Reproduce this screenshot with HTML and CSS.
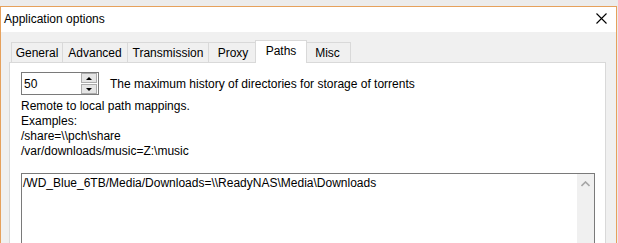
FILE: index.html
```html
<!DOCTYPE html>
<html lang="en">
<head>
    <meta charset="UTF-8">
    <title>Application options</title>
    <link rel="stylesheet" href="styles.css">
</head>
<body>
    <div class="window">
        <div class="titlebar">
            <span class="title">Application options</span>
            <svg class="close" width="11" height="11" viewBox="0 0 11 11">
                <path d="M0.5 0.5 L10.5 10.5 M10.5 0.5 L0.5 10.5" stroke="#000" stroke-width="1.1" fill="none"/>
            </svg>
        </div>

        <div class="content">
            <div class="tabs">
                <div class="tab tab-general">General</div>
                <div class="tab tab-advanced">Advanced</div>
                <div class="tab tab-transmission">Transmission</div>
                <div class="tab tab-proxy">Proxy</div>
                <div class="tab tab-paths active">Paths</div>
                <div class="tab tab-misc">Misc</div>
            </div>

            <div class="panel">
                <div class="spin-row">
                    <div class="spinbox">
                        <span class="spin-value">50</span>
                        <div class="spin-buttons">
                            <div class="spin-btn"><span class="arrow-up"></span></div>
                            <div class="spin-btn"><span class="arrow-down"></span></div>
                        </div>
                    </div>
                    <span class="spin-label">The maximum history of directories for storage of torrents</span>
                </div>

                <div class="help">
                    <div>Remote to local path mappings.</div>
                    <div>Examples:</div>
                    <div>/share=\\pch\share</div>
                    <div>/var/downloads/music=Z:\music</div>
                </div>

                <div class="mappings">
                    <div class="mappings-text">/WD_Blue_6TB/Media/Downloads=\\ReadyNAS\Media\Downloads</div>
                    <div class="scrollbar">
                        <svg width="9" height="6" viewBox="0 0 9 6">
                            <path d="M0.5 5 L4.5 1 L8.5 5" stroke="#a6a6a6" stroke-width="1.6" fill="none"/>
                        </svg>
                    </div>
                </div>
            </div>
        </div>
    </div>
</body>
</html>
```

FILE: styles.css
```css
* {
    margin: 0;
    padding: 0;
    box-sizing: border-box;
}

html, body {
    height: 100%;
    overflow: hidden;
}

body {
    font-family: "Liberation Sans", Arial, sans-serif;
    font-size: 12px;
    color: #000;
    background-color: #ececec;
    padding: 6px 1px 0 0;
}

.window {
    height: 100%;
    border: 1px solid #e6a15c;
    border-bottom: none;
    display: flex;
    flex-direction: column;
}

.titlebar {
    height: 25px;
    flex-shrink: 0;
    background-color: #fff;
    display: flex;
    align-items: center;
    padding-left: 3px;
    padding-right: 9px;
}

.title {
    padding-bottom: 1px;
}

.close {
    margin-left: auto;
    margin-bottom: 2px;
}

.content {
    flex: 1;
    background-color: #f0f0f0;
    padding: 8px 10px 0 8px;
    display: flex;
    flex-direction: column;
}

.tabs {
    display: flex;
    align-items: flex-end;
    height: 22px;
    flex-shrink: 0;
    padding-left: 2px;
}

.tab {
    height: 20px;
    border: 1px solid #d9d9d9;
    border-bottom: none;
    background-color: #f0f0f0;
    display: flex;
    align-items: center;
    justify-content: center;
    margin-left: -1px;
    padding-top: 1px;
}

.tab-general { width: 52px; margin-left: 0; }
.tab-advanced { width: 66px; }
.tab-transmission { width: 82px; }
.tab-proxy { width: 50px; }
.tab-paths { width: 52px; }
.tab-misc { width: 47px; margin-left: -3px; }

.tab.active {
    height: 23px;
    margin-left: -3px;
    margin-bottom: -1px;
    background-color: #fff;
    position: relative;
    z-index: 1;
    padding-top: 0;
    padding-bottom: 3px;
}

.panel {
    flex: 1;
    background-color: #fff;
    border: 1px solid #d9d9d9;
    border-bottom: none;
    padding: 9px 10px 0 11px;
}

.spin-row {
    display: flex;
    align-items: center;
    height: 23px;
}

.spinbox {
    width: 78px;
    height: 23px;
    border: 1px solid #7a7a7a;
    display: flex;
    align-items: center;
    padding-left: 2px;
}

.spin-value {
    flex: 1;
}

.spin-buttons {
    width: 16px;
    height: 21px;
    margin-right: 1px;
    display: flex;
    flex-direction: column;
    justify-content: space-between;
}

.spin-btn {
    height: 10px;
    background-color: #e5e5e5;
    border: 1px solid #acacac;
    display: flex;
    align-items: center;
    justify-content: center;
}

.arrow-up {
    width: 0;
    height: 0;
    border-left: 3px solid transparent;
    border-right: 3px solid transparent;
    border-bottom: 3px solid #000;
}

.arrow-down {
    width: 0;
    height: 0;
    border-left: 3px solid transparent;
    border-right: 3px solid transparent;
    border-top: 3px solid #000;
}

.spin-label {
    margin-left: 11px;
}

.help {
    margin-top: 4px;
    line-height: 15px;
}

.mappings {
    margin-top: 14px;
    width: 574px;
    flex: 1;
    height: 80px;
    border: 1px solid #7a7a7a;
    border-bottom: none;
    display: flex;
}

.mappings-text {
    flex: 1;
    padding: 2px 1px;
    line-height: 15px;
}

.scrollbar {
    width: 17px;
    background-color: #f0f0f0;
    display: flex;
    justify-content: center;
    padding-top: 7px;
}

.scrollbar svg {
    display: block;
}
```
